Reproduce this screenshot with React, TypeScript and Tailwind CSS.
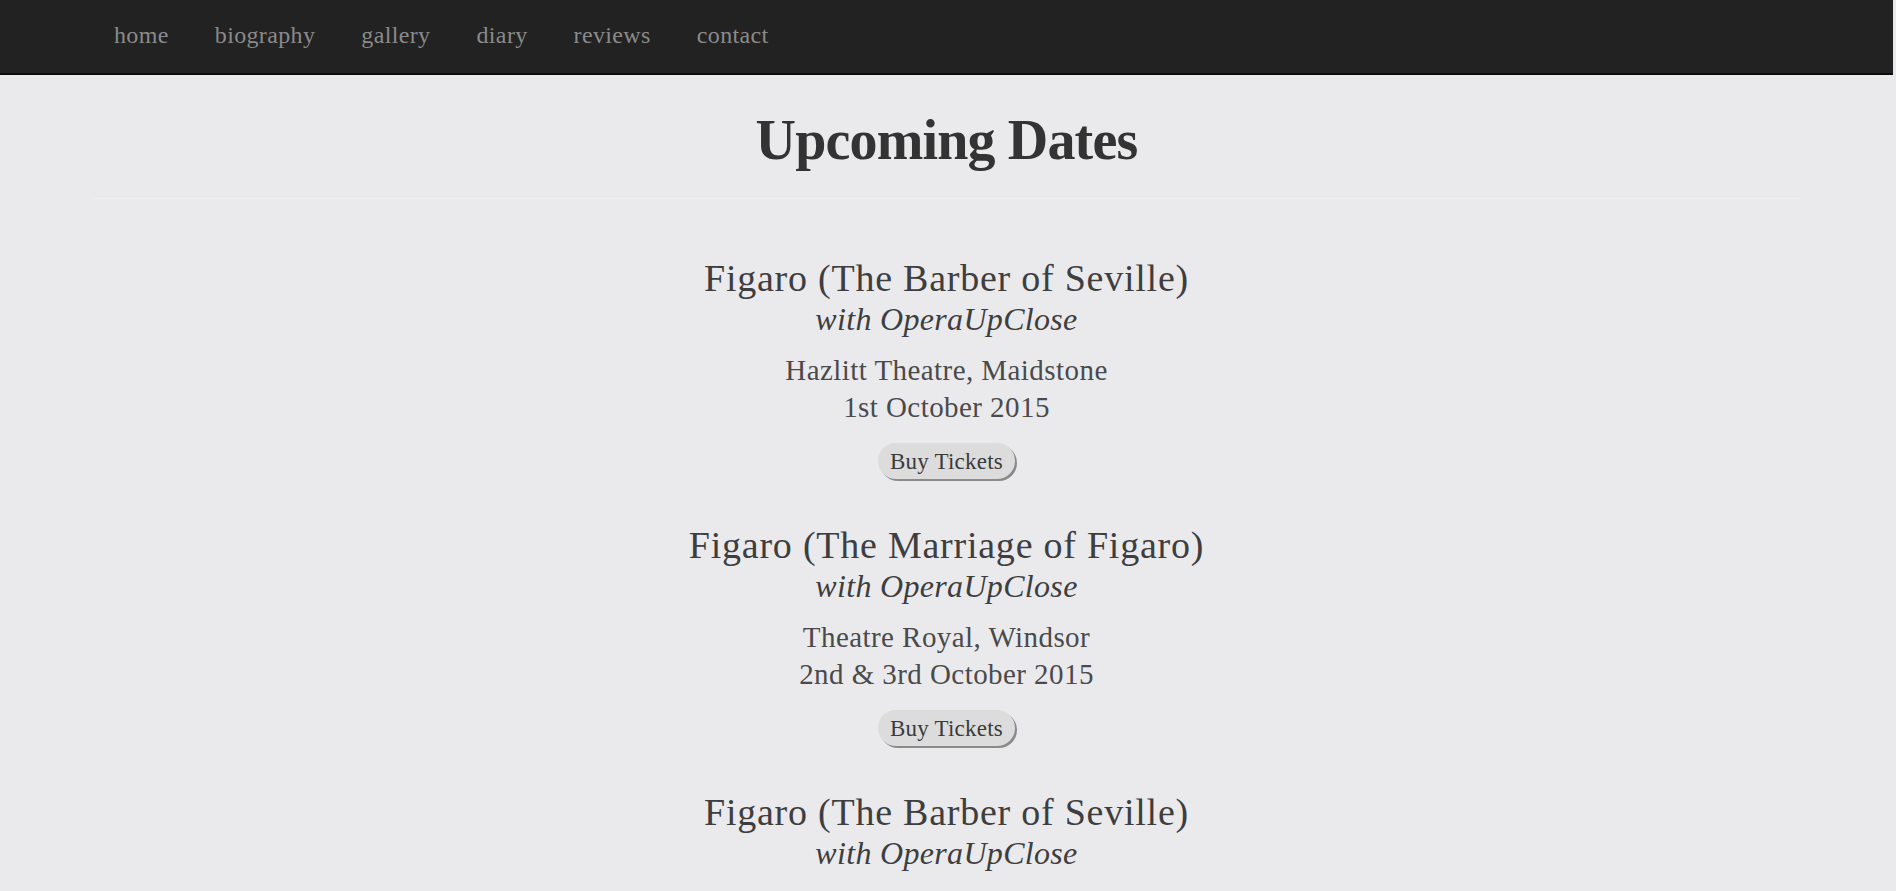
import React from "react";

const events = [
  {
    title: "Figaro (The Barber of Seville)",
    company: "with OperaUpClose",
    venue: "Hazlitt Theatre, Maidstone",
    date: "1st October 2015",
  },
  {
    title: "Figaro (The Marriage of Figaro)",
    company: "with OperaUpClose",
    venue: "Theatre Royal, Windsor",
    date: "2nd & 3rd October 2015",
  },
  {
    title: "Figaro (The Barber of Seville)",
    company: "with OperaUpClose",
    venue: "Hazlitt Theatre, Maidstone",
    date: "1st October 2015",
  },
];

const navItems = ["home", "biography", "gallery", "diary", "reviews", "contact"];

export default function App() {
  return (
    <div
      className="h-[891px] overflow-hidden bg-[#eaeaec]"
      style={{ fontFamily: '"Liberation Serif", "Times New Roman", serif' }}
    >
      <nav className="w-[calc(100%-3px)] h-[75px] bg-[#222222] border-b-2 border-[#0c0c0c] flex items-center pl-[114px] gap-[46px]">
        {navItems.map((n) => (
          <a
            key={n}
            className="text-[24px] leading-none tracking-[0.015em] text-[#8a8a8a] pb-[3px]"
          >
            {n}
          </a>
        ))}
      </nav>
      <main className="w-[calc(100%-3px)] flex flex-col items-center">
        <h1 className="mt-[32px] text-[56px] leading-[67px] font-bold text-[#333333] tracking-[-0.015em]">
          Upcoming Dates
        </h1>
        <div className="self-stretch mx-[93px] mt-[24px] border-t border-[#efeff1]" />
        <div className="flex flex-col items-center mt-[59px] gap-[46px]">
          {events.map((e, i) => (
            <div key={i} className="flex flex-col items-center text-center">
              <div className="text-[38px] leading-[40px] tracking-[0.02em] text-[#3e3e40]">
                {e.title}
              </div>
              <div className="text-[32px] leading-[42px] italic tracking-[0.01em] text-[#3e3e40]">
                {e.company}
              </div>
              <div className="mt-[12px] text-[29px] leading-[37px] tracking-[0.015em] text-[#4a4a4c]">
                {e.venue}
              </div>
              <div className="text-[29px] leading-[37px] tracking-[0.015em] text-[#4a4a4c]">
                {e.date}
              </div>
              <button className="mt-[17px] h-[36px] px-[12px] rounded-full bg-[#dcdcdc] shadow-[2px_2px_0_#8a8a8a] text-[23px] leading-none tracking-[0.01em] text-[#3a3a3a] flex items-center">
                Buy Tickets
              </button>
            </div>
          ))}
        </div>
      </main>
    </div>
  );
}
